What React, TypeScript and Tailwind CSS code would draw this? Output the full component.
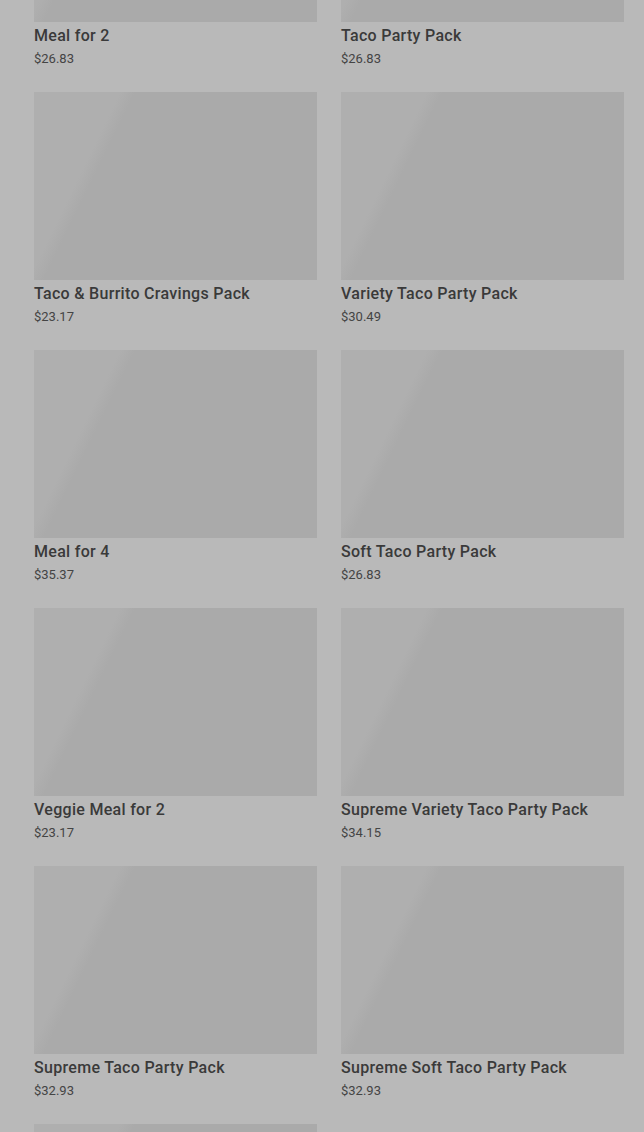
const products = [
  { name: "Meal for 2", price: "$26.83" },
  { name: "Taco Party Pack", price: "$26.83" },
  { name: "Taco & Burrito Cravings Pack", price: "$23.17" },
  { name: "Variety Taco Party Pack", price: "$30.49" },
  { name: "Meal for 4", price: "$35.37" },
  { name: "Soft Taco Party Pack", price: "$26.83" },
  { name: "Veggie Meal for 2", price: "$23.17" },
  { name: "Supreme Variety Taco Party Pack", price: "$34.15" },
  { name: "Supreme Taco Party Pack", price: "$32.93" },
  { name: "Supreme Soft Taco Party Pack", price: "$32.93" },
];

const Placeholder = () => (
  <div className="h-[188px] w-full bg-[linear-gradient(116deg,#afafaf_0%,#afafaf_23%,#aaaaaa_27%,#aaaaaa_100%)]" />
);

const ProductCard = ({ name, price }: { name: string; price: string }) => (
  <div className="pb-[23px]">
    <Placeholder />
    <h3 className="mt-[2px] text-[16px] leading-6 font-medium tracking-[0.3px] text-[#3a3a3a]">{name}</h3>
    <p className="mt-[1px] text-[13px] leading-5 text-[#444444]">{price}</p>
  </div>
);

const App = () => {
  return (
    <div
      className="h-[1132px] overflow-hidden bg-[#b9b9b9]"
      style={{ fontFamily: "Roboto, 'Liberation Sans', sans-serif" }}
    >
      <div className="-mt-[166px] grid grid-cols-2 gap-x-6 pl-[34px] pr-5">
        {products.map(p => (
          <ProductCard key={p.name} name={p.name} price={p.price} />
        ))}
        {/* next row, only the image is in view */}
        <Placeholder />
      </div>
    </div>
  );
};

export default App;
